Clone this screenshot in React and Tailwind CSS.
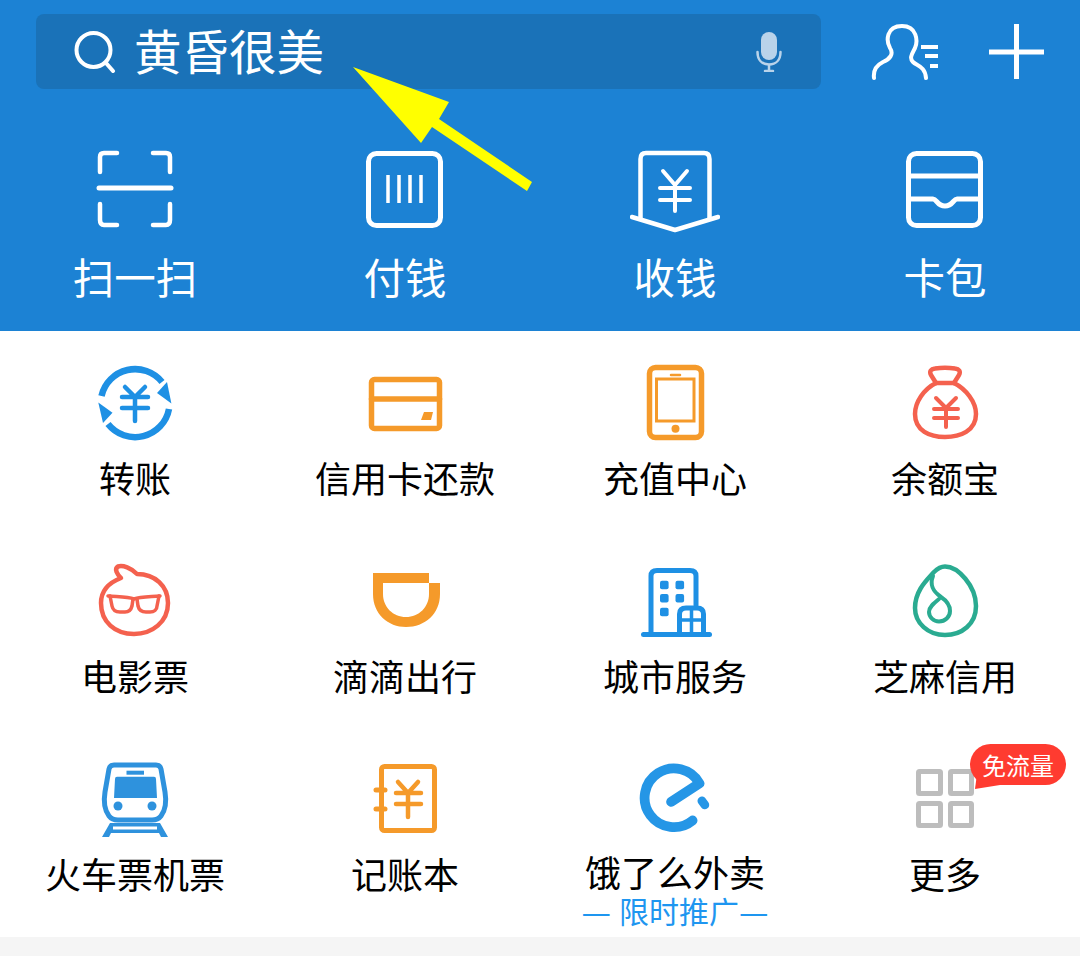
const cjk = "font-['Noto_Sans_CJK_SC','Liberation_Sans',sans-serif]"

const Box = ({ children, stroke = "currentColor", sw = 5 }) => (
  <svg width="90" height="90" viewBox="0 0 90 90" fill="none" stroke={stroke} strokeWidth={sw} strokeLinecap="round" strokeLinejoin="round">
    {children}
  </svg>
)

// top row
const ScanIcon = () => (
  <Box stroke="#fff" sw={4.5}>
    <path d="M10 29 V14 Q10 10 14 10 H27" />
    <path d="M63 10 H76 Q80 10 80 14 V29" />
    <path d="M10 61 V77 Q10 82 14 82 H27" />
    <path d="M63 82 H76 Q80 82 80 77 V61" />
    <path d="M9 45 H81" strokeWidth="5" />
  </Box>
)

const PayIcon = () => (
  <Box stroke="#fff" sw={5}>
    <rect x="8.5" y="10.5" width="72" height="72" rx="8" />
    <path d="M28 32 V60 M39 32 V60 M50 32 V60 M61 32 V60" strokeWidth="3.5" strokeLinecap="butt" />
  </Box>
)

const ReceiveIcon = () => (
  <Box stroke="#fff" sw={4.5}>
    <path d="M10.5 76 V16 Q10.5 10 16 10 H74 Q79.5 10 79.5 16 V76" />
    <path d="M2 74 L45 87 L88 74" />
    <path d="M33 28 L45 42 L57 28 M30 45 H60 M30 57 H60 M45 42 V68" strokeWidth="4" />
  </Box>
)

const WalletIcon = () => (
  <Box stroke="#fff" sw={5}>
    <rect x="8.5" y="10.5" width="72" height="72" rx="8" />
    <path d="M8.5 33 H80.5" />
    <path d="M8.5 56 H33 C37 56 37 63 45 63 C53 63 53 56 57 56 H80.5" />
  </Box>
)

// service grid
const TransferIcon = () => (
  <Box stroke="#1e90e4" sw={6.5}>
    <path d="M11.5 38 A34.5 34.5 0 0 1 72 24" strokeLinecap="butt" />
    <path d="M67 35 L81.4 45.5 L77 24 Z" fill="#1e90e4" stroke="none" />
    <path d="M79 51 A34.5 34.5 0 0 1 18 66" strokeLinecap="butt" />
    <path d="M8.3 44.5 L22.5 54.7 L13 65 Z" fill="#1e90e4" stroke="none" />
    <path d="M35 29 L45 39 L55 29 M32 39 H58 M32 50 H58 M45 39 V63" strokeWidth="4.5" />
  </Box>
)

const CardIcon = () => (
  <Box stroke="#f59a2a" sw={5.5}>
    <rect x="11.5" y="21.5" width="68" height="49" rx="3" />
    <path d="M11.5 41 H79.5" />
    <path d="M64 54 H73 L71 62 H61 Z" fill="#f59a2a" stroke="none" />
  </Box>
)

const TabletIcon = () => (
  <Box stroke="#f59a2a" sw={5.5}>
    <rect x="19.5" y="9.5" width="52" height="70" rx="6" />
    <rect x="26.5" y="21" width="37.5" height="42" strokeWidth="3" strokeLinejoin="miter" />
    <path d="M41 17 H50" strokeWidth="2.5" />
    <circle cx="45.5" cy="70.7" r="4" fill="#f59a2a" stroke="none" />
  </Box>
)

const BagIcon = () => (
  <Box stroke="#f4614e" sw={4.5}>
    <path d="M36 25 L31 17 C29 13 31 11 35 10.5 C41 9.5 49 9.5 55 10.5 C59 11 61 13 59 17 L54 25" />
    <path d="M36 25 H54" />
    <path d="M36 25 C24 31 15 44 15 56 C15 73 30 79 45 79 C60 79 76 73 76 56 C76 44 66 31 54 25" />
    <path d="M36 40 L46 50 L56 40 M34 51 H58 M34 60 H58 M46 50 V69" strokeWidth="4" />
  </Box>
)

const MovieIcon = () => (
  <Box stroke="#f4614e" sw={4.5}>
    <path d="M31 22 C27 18 24 13 28 10.5 C33 9 41 12 47 18 C65 18 78 30 78 47 C78 66 62 78 44 78 C25 78 11 66 11 47 C11 36 18 27 31 22 Z" />
    <path d="M18 40 C30 41 38 41 44 43 C50 41 58 41 70 40" strokeWidth="3.5" />
    <path d="M20 40 L22 50 C23 55 26 56 30 56 H35 C39 56 41 54 42 50 L43 43" strokeWidth="3.5" />
    <path d="M47 43 L48 50 C49 54 52 56 56 56 H60 C64 56 67 54 67 50 L69 40" strokeWidth="3.5" />
  </Box>
)

const DidiIcon = () => (
  <Box>
    <path
      d="M13 17 H69 V27 H23 V38 C23 51 33 61 46 61 C59 61 69 51 69 38 V27 H80 V38 C80 58 65 71 46 71 C28 71 13 58 13 38 Z"
      fill="#f59a2a"
      stroke="none"
    />
  </Box>
)

const CityIcon = () => (
  <Box stroke="#1e90e4" sw={5}>
    <path d="M13.5 78.5 H79.5" />
    <path d="M21 78 V20 Q21 14.5 27 14.5 H60 Q66 14.5 66 20 V49" />
    <path d="M49.5 78 V58 Q49.5 52 56 52 H67 Q73.5 52 73.5 58 V78" />
    <path d="M49.5 64 H73.5 M61.5 52 V78" strokeWidth="3.5" strokeLinecap="butt" />
    <g fill="#1e90e4" stroke="none">
      <rect x="30" y="24.7" width="8.6" height="8.6" rx="2" />
      <rect x="45.5" y="24.7" width="8.6" height="8.6" rx="2" />
      <rect x="30" y="38" width="8.6" height="8.6" rx="2" />
      <rect x="45.5" y="38" width="8.6" height="8.6" rx="2" />
      <rect x="30" y="51.7" width="8.6" height="8.6" rx="2" />
    </g>
  </Box>
)

const SesameIcon = () => (
  <Box stroke="#2aab91" sw={4.5}>
    <path d="M45 10.5 C58 10.5 76 30 76 50 C76 68 62 79 45 79 C28 79 15 67 15 52 C15 34 28 23 34 16 C38 12 41 10.5 45 10.5 Z" />
    <path d="M33 20 C29 30 34 36 41 41 C47 45 50 50 50 55 C50 61 45 65.5 39 65.5 C33.5 65.5 29 61 29 56 C29 51 34 47 39 43" strokeWidth="4" />
  </Box>
)

const TrainIcon = () => (
  <Box stroke="#2e92dd" sw={5}>
    <path d="M24 11 H66 Q70 11 71 15 L75 38 C77 50 74 58 71 62 Q68 66 62 66 H28 Q22 66 19 62 C16 58 13 50 15 38 L19 15 Q20 11 24 11 Z" />
    <g fill="#2e92dd" stroke="none">
      <rect x="36.5" y="16.7" width="17.5" height="4" />
      <path d="M27 22.7 H64 Q66 22.7 66 25 L67 44 H24 L25 25 Q25 22.7 27 22.7 Z" />
      <circle cx="28" cy="52" r="4.5" />
      <circle cx="62" cy="52" r="4.5" />
      <path d="M20 69 H70 L78 83 H71 L69 79 H21 L19 83 H12 Z" />
      <rect x="23" y="72.5" width="44" height="3" fill="#fff" />
    </g>
  </Box>
)

const LedgerIcon = () => (
  <Box stroke="#f59a2a" sw={5}>
    <rect x="21.5" y="12.5" width="53" height="64" rx="3" />
    <path d="M16 36 H25 M16 55 H25" />
    <path d="M38 28 L48 39 L58 28 M36 39 H61 M36 50 H61 M48 39 V63" strokeWidth="4.5" />
  </Box>
)

const EleIcon = () => (
  <Box stroke="#2596e6" sw={10}>
    <path d="M41 49 L70 30 A30 30 0 1 0 63 68" />
    <path d="M72.5 48 L75.5 52" strokeWidth="9" />
  </Box>
)

const MoreIcon = () => (
  <Box stroke="#bdbdbd" sw={5}>
    <rect x="18.5" y="17.5" width="22" height="22" rx="1" />
    <rect x="50.5" y="17.5" width="21" height="22" rx="1" />
    <rect x="18.5" y="49.5" width="22" height="22" rx="1" />
    <rect x="50.5" y="49.5" width="21" height="22" rx="1" />
  </Box>
)

const quick = [
  { label: "扫一扫", icon: <ScanIcon /> },
  { label: "付钱", icon: <PayIcon /> },
  { label: "收钱", icon: <ReceiveIcon /> },
  { label: "卡包", icon: <WalletIcon /> },
]

const services = [
  { label: "转账", icon: <TransferIcon /> },
  { label: "信用卡还款", icon: <CardIcon /> },
  { label: "充值中心", icon: <TabletIcon /> },
  { label: "余额宝", icon: <BagIcon /> },
  { label: "电影票", icon: <MovieIcon /> },
  { label: "滴滴出行", icon: <DidiIcon /> },
  { label: "城市服务", icon: <CityIcon /> },
  { label: "芝麻信用", icon: <SesameIcon /> },
  { label: "火车票机票", icon: <TrainIcon /> },
  { label: "记账本", icon: <LedgerIcon /> },
  { label: "饿了么外卖", icon: <EleIcon />, sub: "限时推广" },
  { label: "更多", icon: <MoreIcon />, badge: "免流量" },
]

const SearchBar = () => (
  <div className="flex h-[75px] w-[785px] items-center rounded-lg bg-[#1a72b8] pl-[38px] pr-[39px]">
    <svg width="42" height="42" viewBox="0 0 42 42" fill="none" stroke="#fff" strokeWidth="4" strokeLinecap="round" className="shrink-0">
      <circle cx="19.5" cy="19" r="17" />
      <path d="M32 32 L39 40" />
    </svg>
    <span className="ml-[18px] flex-1 pb-[4px] text-[47.5px] leading-[54px] text-white">黄昏很美</span>
    <svg width="26" height="40" viewBox="0 0 26 40" fill="none" stroke="#b9d3ea" strokeWidth="2.5" strokeLinecap="round">
      <rect x="5" y="0" width="16" height="28" rx="8" fill="#b9d3ea" stroke="none" />
      <path d="M1.5 20 C1.5 28 6 32.5 13 32.5 C20 32.5 24.5 28 24.5 20" />
      <path d="M13 33 V39 M9 39 H17" />
    </svg>
  </div>
)

export default function App() {
  return (
    <div className={`relative min-h-[956px] bg-[#f5f5f5] ${cjk}`}>
      <header className="h-[331px] bg-[#1c82d4] pt-[14px]">
        <div className="flex items-center pl-[36px]">
          <SearchBar />
          <svg width="70" height="58" viewBox="0 0 70 58" fill="none" stroke="#fff" strokeWidth="4" strokeLinecap="round" className="ml-[50px]">
            <path d="M3 55 C2 47 6 42 12 39 C19 36 23 31 19 25 C15 18 15 3 31 3 C46 3 47 18 44 25 C41 31 38 35 42 39 C46 43 54 43 55 55" />
            <path d="M50 24 H67 M54 33 H67 M59 43 H67" strokeLinecap="butt" />
          </svg>
          <svg width="56" height="56" viewBox="0 0 56 56" stroke="#fff" strokeWidth="5" className="ml-[48px]">
            <path d="M0 28 H55 M27.5 0 V55" />
          </svg>
        </div>
        <div className="mt-[54px] grid grid-cols-4">
          {quick.map((item) => (
            <div key={item.label} className="flex flex-col items-center">
              {item.icon}
              <span className="mt-[17px] text-[41.5px] leading-[52px] text-white">{item.label}</span>
            </div>
          ))}
        </div>
      </header>

      <main className="grid auto-rows-[198px] grid-cols-4 bg-white pb-3">
        {services.map((item) => (
          <div key={item.label} className="relative flex flex-col items-center pt-[27px]">
            {item.icon}
            <span className="mt-[7px] text-[36px] leading-[44px] text-black">{item.label}</span>
            {item.sub && (
              <span className="mt-[2px] flex h-[30px] items-center text-[30px] leading-[30px] text-[#1e96f0]">
                <span className="mr-[8px] text-[33px]">—</span>
                {item.sub}
                <span className="text-[33px]">—</span>
              </span>
            )}
            {item.badge && (
              <div className="absolute right-[14px] top-[17px] flex h-[41px] w-[96px] items-center justify-center rounded-full bg-[#ff3b30] text-[24px] text-white">
                {item.badge}
                <svg width="26" height="16" viewBox="0 0 26 16" className="absolute left-[5px] top-[30px]">
                  <path d="M2 0 L0 15 L25 11 Z" fill="#ff3b30" />
                </svg>
              </div>
            )}
          </div>
        ))}
      </main>

      {/* annotation arrow over the search bar */}
      <svg width="1080" height="956" viewBox="0 0 1080 956" className="pointer-events-none absolute left-0 top-0">
        <path d="M353 67 L449 102 L439 119 L532 182 L527 191 L432 127 L421 143 Z" fill="#ffff00" />
      </svg>
    </div>
  )
}
